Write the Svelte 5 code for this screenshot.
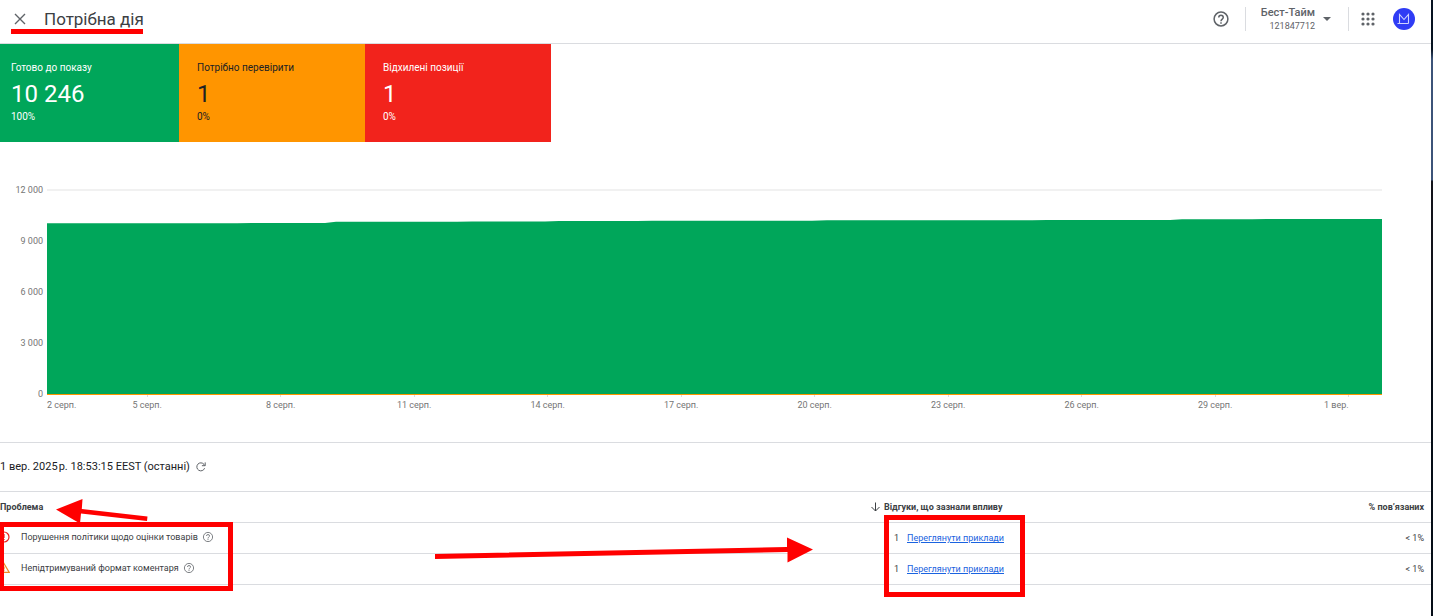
<script>
  const tiles = [
    { name: 'Готово до показу', value: '10 246', share: '100%', kind: 'ready' },
    { name: 'Потрібно перевірити', value: '1', share: '0%', kind: 'review' },
    { name: 'Відхилені позиції', value: '1', share: '0%', kind: 'rejected' }
  ];
  const levels = ['12 000', '9 000', '6 000', '3 000', '0'];
  const days = ['2 серп.', '5 серп.', '8 серп.', '11 серп.', '14 серп.', '17 серп.', '20 серп.', '23 серп.', '26 серп.', '29 серп.', '1 вер.'];
  const issues = [
    { text: 'Порушення політики щодо оцінки товарів', kind: 'error', count: 1, share: '< 1%' },
    { text: 'Непідтримуваний формат коментаря', kind: 'warning', count: 1, share: '< 1%' }
  ];
  const dots = [4, 9, 14];
</script>

{#snippet help(size, weight)}
  <svg width={size} height={size} viewBox="0 0 24 24" fill="none" stroke="currentColor" stroke-width={weight} aria-hidden="true">
    <circle cx="12" cy="12" r="9.200" />
    <path d="M9 10a3 3 0 0 1 6 0c0 2-3 2.300-3 5M12 16.200v2" />
  </svg>
{/snippet}

<div class="page">
  <header>
    <button class="icon close" aria-label="Закрити">
      <svg width="12" height="12" viewBox="0 0 12 12"><path d="M1 1l10 10M11 1L1 11" fill="none" stroke="currentColor" stroke-width="1.400" /></svg>
    </button>
    <h1>Потрібна дія</h1>
    <button class="icon help" aria-label="Довідка">{@render help(18, 2)}</button>
    <button class="account">
      <span class="who"><span class="shop">Бест-Тайм</span><span class="number">121847712</span></span>
      <svg width="8" height="4" viewBox="0 0 8 4"><path d="M0 0h8L4 4z" fill="currentColor" /></svg>
    </button>
    <button class="icon apps" aria-label="Додатки">
      <svg width="14" height="14" viewBox="2 2 14 14">
        {#each dots as y}{#each dots as x}<circle cx={x} cy={y} r="1.600" fill="currentColor" />{/each}{/each}
      </svg>
    </button>
    <button class="icon avatar" aria-label="Профіль">
      <svg width="22" height="22" viewBox="0 0 22 22">
        <circle cx="11" cy="11" r="11" fill="#2f3cf5" />
        <path d="M6.500 15.500V6.500L11 11.500l4.500-5V15.500M4.500 15.500H15.500" fill="none" stroke="#cfd3ff" stroke-width="1.100" />
      </svg>
    </button>
  </header>

  <section class="tiles">
    {#each tiles as tile}
      <div class="tile {tile.kind}">
        <span class="name">{tile.name}</span>
        <strong>{tile.value}</strong>
        <span class="share">{tile.share}</span>
      </div>
    {/each}
  </section>

  <section class="chart">
    <div class="levels">{#each levels as level}<span>{level}</span>{/each}</div>
    <svg class="plot" viewBox="0 0 1335 208" preserveAspectRatio="none" aria-hidden="true">
      <path d="M0 1h1335" stroke="#f1f1f1" stroke-width="2" />
      <path d="M100.500 205v3M233.500 205v3M367.500 205v3M500.500 205v3M634.500 205v3M767.500 205v3M901.500 205v3M1034.500 205v3M1168.500 205v3M1301.500 205v3" stroke="#ddd" />
      <path d="M0 34.300L190 34.200L205 34H278L289 32.800H410L425 32.500H498L512 32H590L605 31.700H765L780 31.300H985L1000 31H1123L1135 30.200H1205L1220 30H1335V205H0z" fill="#00a65a" />
      <path d="M0 205.500H1335" stroke="#ff9500" />
    </svg>
    <div class="days">{#each days as day}<span>{day}</span>{/each}</div>
  </section>

  <section class="report">
    <div class="updated">
      <span>1 вер. 2025&#8202;р. 18:53:15 EEST (останні)</span>
      <button class="icon" aria-label="Оновити">
        <svg width="10" height="10" viewBox="0 0 10 10"><path d="M8.600 6.200A4 4 0 1 1 8 2.400L8.900 3.500M9.200 .4V3.700H5.900" fill="none" stroke="currentColor" /></svg>
      </button>
    </div>
    <table>
      <thead>
        <tr>
          <th class="problem">Проблема</th>
          <th class="affected">
            <span class="sort">
              <svg width="9" height="10" viewBox="0 0 9 10"><path d="M4.500 .5V9M.5 5L4.500 9L8.500 5" fill="none" stroke="currentColor" /></svg>
              Відгуки, що зазнали впливу
            </span>
          </th>
          <th class="related">% повʼязаних</th>
        </tr>
      </thead>
      <tbody>
        {#each issues as issue}
          <tr>
            <td>
              <div class="issue">
                {#if issue.kind === 'error'}
                  <svg width="12" height="12" viewBox="0 0 12 12"><circle cx="6" cy="6" r="5" fill="none" stroke="#e8201c" stroke-width="1.200" /><path d="M6 3v4M6 8v1" stroke="#e8201c" stroke-width="1.200" /></svg>
                {:else}
                  <svg width="12" height="12" viewBox="0 0 12 12"><path d="M6 1.500L11.200 10.400H.8z" fill="none" stroke="#f08a24" stroke-width="1.200" /><path d="M6 4.500v3M6 8.300v1" stroke="#f08a24" stroke-width="1.200" /></svg>
                {/if}
                <span>{issue.text}</span>
                <button class="icon" aria-label="Докладніше">{@render help(12, 1.6)}</button>
              </div>
            </td>
            <td><div class="examples"><span>{issue.count}</span><a href="#examples">Переглянути приклади</a></div></td>
            <td class="related">{issue.share}</td>
          </tr>
        {/each}
      </tbody>
    </table>
  </section>

  <i class="mark underline"></i>
  <i class="mark frame problems"></i>
  <i class="mark frame links"></i>
  <svg class="mark arrow-left" width="92" height="26" viewBox="0 0 92 26" fill="#f00"><path d="M0 10.500L26.500 0L25.800 10L91.500 17.500L91 22L25 14.500L24 24.500z" /></svg>
  <svg class="mark arrow-right" width="378" height="26" viewBox="0 0 378 26" fill="#f00"><path d="M0 17L352 10V.5L378 12.500L352.500 25.500V15L0 22z" /></svg>
</div>

<style>
  :global(body) {
    margin: 0;
    background: #fff;
  }
  .page {
    position: relative;
    box-sizing: border-box;
    min-height: 100vh;
    overflow: hidden;
    border-right: 2px solid #07111d;
    border-image: linear-gradient(#061220 0 50px, #3c5378 60px 180px, #12131a 182px 300px, #050d17 380px) 1;
    font-family: Roboto, sans-serif;
    font-size: 9px;
    line-height: 12px;
    color: #3c4043;
  }
  button {
    border: 0;
    padding: 0;
    background: none;
    font: inherit;
    color: #5f6368;
  }
  .icon {
    display: flex;
  }
  svg {
    flex: none;
  }
  header {
    display: flex;
    align-items: center;
    box-sizing: border-box;
    height: 44px;
    padding: 0 16px 5px 14px;
    border-bottom: 1px solid #dadce0;
  }
  h1 {
    margin: 0 auto 0 18px;
    font-size: 17px;
    line-height: 24px;
    font-weight: 400;
  }
  .help {
    margin-right: 15px;
  }
  .account {
    display: flex;
    align-items: center;
    gap: 8px;
    height: 24px;
    padding: 0 17px 0 15px;
    border: solid #dadce0;
    border-width: 0 1px;
  }
  .who {
    display: flex;
    flex-direction: column;
    text-align: right;
  }
  .shop {
    font-size: 11px;
    line-height: 14px;
    font-weight: 500;
  }
  .apps {
    margin: 0 18px 0 12px;
  }
  .tiles {
    display: flex;
    margin-left: -7px;
  }
  .tile {
    display: flex;
    flex-direction: column;
    box-sizing: border-box;
    width: 186px;
    padding: 18px 18px 19px;
    color: #fff;
  }
  .name {
    font-size: 10px;
  }
  .tile strong {
    margin: 7px 0 4px;
    font-size: 24px;
    line-height: 26px;
    font-weight: 400;
  }
  .share {
    font-size: 10px;
  }
  .ready {
    background: #00a65a;
  }
  .review {
    background: #ff9500;
    color: #202124;
  }
  .rejected {
    background: #f2231c;
  }
  .chart {
    display: grid;
    grid-template-columns: 43px 1fr;
    column-gap: 4px;
    padding: 42px 49px 31px 0;
    border-bottom: 1px solid #dadce0;
    color: #757575;
  }
  .levels {
    display: flex;
    flex-direction: column;
    justify-content: space-between;
    height: 216px;
    text-align: right;
  }
  .plot {
    width: 100%;
    height: 208px;
    margin-top: 5px;
  }
  .days {
    grid-column: 2;
    display: grid;
    grid-template-columns: 2.5% repeat(9, 10%) 5%;
    margin-top: -1px;
    text-align: center;
    white-space: nowrap;
  }
  .days span:first-child {
    text-align: left;
  }
  .days span:last-child {
    text-align: right;
  }
  .updated {
    display: flex;
    align-items: center;
    gap: 6px;
    height: 48px;
    font-size: 11px;
    color: #202124;
  }
  table {
    width: 100%;
    border-collapse: collapse;
    border-top: 1px solid #dadce0;
  }
  th,
  td {
    height: 30px;
    padding: 0;
    border-bottom: 1px solid #dadce0;
    text-align: left;
  }
  th {
    font-weight: 700;
  }
  .affected {
    width: 20%;
  }
  .related {
    width: 19%;
    padding-right: 7px;
    text-align: right;
  }
  .sort,
  .issue,
  .examples {
    display: flex;
    align-items: center;
    margin-left: -2px;
  }
  .sort {
    gap: 4px;
  }
  .issue {
    gap: 4px;
    padding-bottom: 2px;
  }
  .issue span {
    margin-left: 7px;
  }
  .examples {
    gap: 8px;
    padding-left: 23px;
  }
  a {
    color: #1a63e0;
    text-decoration: underline;
  }
  .mark {
    position: absolute;
    box-sizing: border-box;
    pointer-events: none;
  }
  .underline {
    left: 11px;
    top: 29px;
    width: 132px;
    height: 5px;
    background: #f00;
  }
  .frame {
    border: 5px solid #f00;
  }
  .problems {
    left: -1px;
    top: 522px;
    width: 234px;
    height: 69px;
  }
  .links {
    left: 884px;
    top: 515px;
    width: 141px;
    height: 82px;
  }
  .arrow-left {
    left: 56px;
    top: 499px;
  }
  .arrow-right {
    left: 435px;
    top: 537px;
  }
</style>
